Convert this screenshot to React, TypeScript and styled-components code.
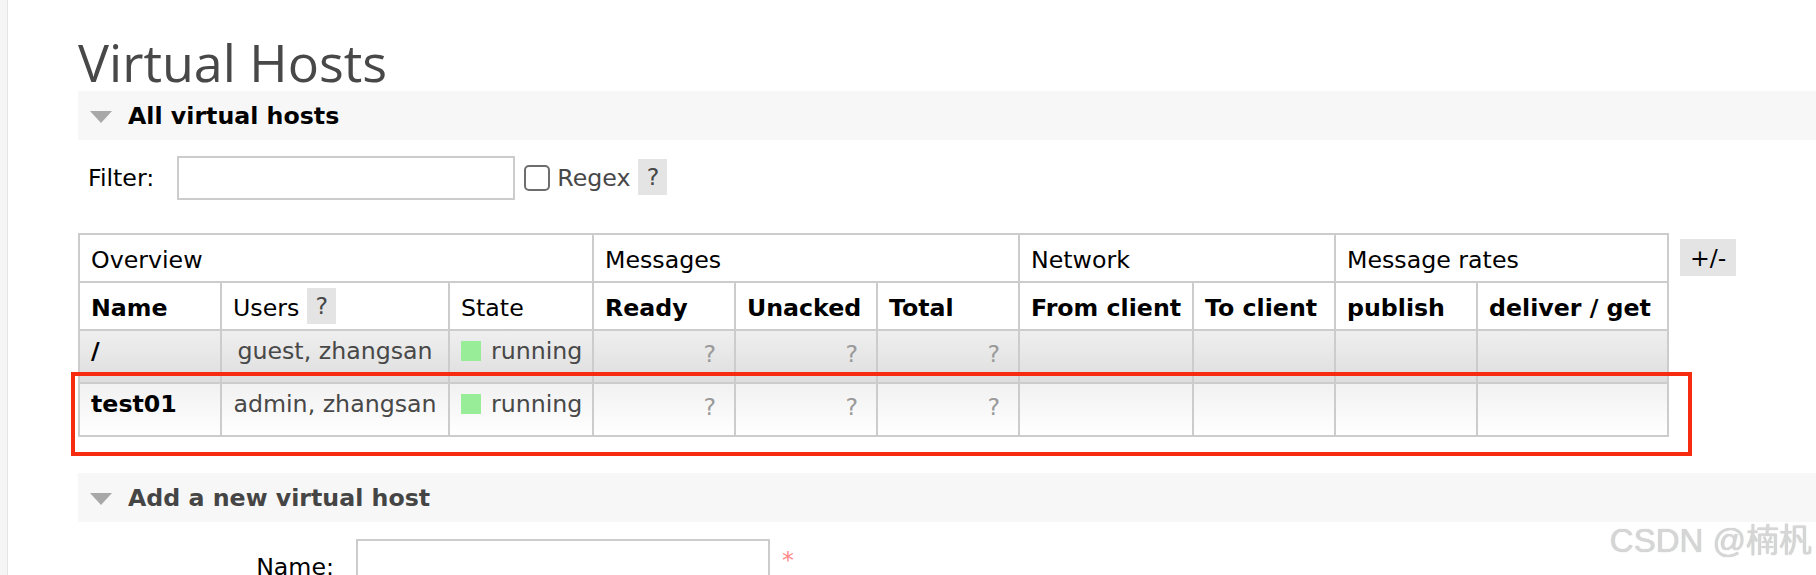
import React from "react";
import styled, { createGlobalStyle } from "styled-components";

const GlobalStyle = createGlobalStyle`
  html, body { margin: 0; padding: 0; background: #fff; }
  body {
    font-family: "DejaVu Sans", Verdana, sans-serif;
    font-size: 23.7px;
    color: #484848;
  }
  *, *::before, *::after { box-sizing: border-box; }
`;

const Shell = styled.div`
  position: relative;
  display: flex;
  width: 1816px;
  min-height: 575px;
  overflow: hidden;
`;

const Gutter = styled.div`
  flex: none;
  width: 8px;
  background: #f5f5f5;
  border-right: 1px solid #e4e4e4;
`;

const Main = styled.main`
  flex: 1;
  min-width: 0;
  padding: 36px 0 0 70px;
`;

const Title = styled.h1`
  margin: 0;
  font-family: "Open Sans", "DejaVu Sans", sans-serif;
  font-weight: 400;
  font-size: 52px;
  line-height: 52px;
  color: #484848;
`;

const SectionBar = styled.div<{ $gap: number }>`
  display: flex;
  align-items: center;
  gap: 16px;
  height: 49px;
  margin-top: ${(p) => p.$gap}px;
  padding-left: 12px;
  background: #f7f7f7;
`;

const Toggle = styled.svg`
  flex: none;
  margin-top: 3px;
`;

const SectionTitle = styled.h2<{ $muted?: boolean }>`
  margin: 0;
  font-size: 23.7px;
  font-weight: 700;
  color: ${(p) => (p.$muted ? "#454545" : "#000")};
`;

const FilterRow = styled.div`
  display: flex;
  align-items: center;
  height: 44px;
  margin-top: 16px;
  padding-left: 10px;
`;

const FieldLabel = styled.label`
  color: #000;
  margin-right: 23px;
`;

const TextField = styled.input<{ $width: number }>`
  width: ${(p) => p.$width}px;
  height: 44px;
  margin: 0;
  padding: 0 6px;
  border: 2px solid #ccc;
  border-radius: 0;
  font: inherit;
  outline: none;
  background: #fff;
`;

const CheckBox = styled.input`
  appearance: none;
  width: 26px;
  height: 26px;
  margin: 0 0 0 9px;
  border: 2px solid #6d6d6d;
  border-radius: 5px;
  background: #fff;
`;

const CheckText = styled.span`
  margin-left: 7px;
  color: #484848;
`;

const HelpBadge = styled.span<{ $lift?: number }>`
  display: inline-flex;
  align-items: center;
  justify-content: center;
  flex: none;
  width: 29px;
  height: 36px;
  margin-left: ${(p) => (p.$lift !== undefined ? 8 : 6)}px;
  margin-top: ${(p) => p.$lift ?? -4}px;
  background: #e4e4e4;
  color: #484848;
  font-weight: 400;
`;

const TableRow = styled.div`
  position: relative;
  display: flex;
  align-items: flex-start;
  margin-top: 33px;
`;

const Grid = styled.div`
  display: inline-grid;
  grid-template-columns: 142px 228px 144px 142px 142px 142px 174px 142px 142px 191px;
  grid-template-rows: 48px 48px 53px 53px;
  border-top: 2px solid #ccc;
  border-left: 2px solid #ccc;
`;

const HeadCell = styled.div<{ $span?: number; $bold?: boolean }>`
  grid-column: span ${(p) => p.$span ?? 1};
  display: flex;
  align-items: flex-start;
  padding: 11px 11px 0;
  border-right: 2px solid #ccc;
  border-bottom: 2px solid #ccc;
  background: #fff;
  color: #000;
  font-weight: ${(p) => (p.$bold ? 700 : 400)};
  white-space: nowrap;
`;

const DataCell = styled.div<{
  $alt: 1 | 2;
  $align?: "left" | "center" | "right";
  $bold?: boolean;
  $muted?: boolean;
}>`
  display: flex;
  align-items: flex-start;
  justify-content: ${(p) =>
    p.$align === "center" ? "center" : p.$align === "right" ? "flex-end" : "flex-start"};
  padding: ${(p) => (p.$align === "right" ? "9px 18px 0 11px" : "6px 11px 0")};
  border-right: 2px solid #ccc;
  border-bottom: 2px solid #ccc;
  background: ${(p) =>
    p.$alt === 1
      ? "linear-gradient(to bottom, #efefef 0%, #dedede 100%)"
      : "linear-gradient(to bottom, #f1f1f1 0%, #ffffff 100%)"};
  color: ${(p) => (p.$bold ? "#000" : p.$muted ? "#9a9a9a" : "#484848")};
  font-weight: ${(p) => (p.$bold ? 700 : 400)};
  white-space: nowrap;
`;

const StateLine = styled.span`
  display: flex;
  align-items: center;
  gap: 10px;
`;

const StateDot = styled.span`
  width: 20px;
  height: 20px;
  background: #98ee98;
`;

const ToggleColumns = styled.button`
  height: 37px;
  margin: 6px 0 0 11px;
  padding: 0 10px;
  border: none;
  background: #e4e4e4;
  color: #000;
  font: inherit;
`;

const Highlight = styled.div`
  position: absolute;
  top: 139px;
  left: -7.5px;
  width: 1621.5px;
  height: 84px;
  border: 4.5px solid #f72b0f;
  pointer-events: none;
`;

const FormRow = styled.div`
  display: flex;
  align-items: flex-start;
  margin-top: 17px;
`;

const FormLabel = styled.label`
  width: 256px;
  padding-top: 14px;
  text-align: right;
  color: #000;
`;

const FormField = styled.div`
  display: flex;
  align-items: flex-start;
  margin-left: 22px;
`;

const Mandatory = styled.span`
  margin-left: 12px;
  padding-top: 7px;
  color: #f88;
`;

const Watermark = styled.div`
  position: absolute;
  right: 4px;
  top: 521px;
  font-family: "Liberation Sans", "Noto Sans CJK SC", sans-serif;
  font-size: 33px;
  line-height: 40px;
  color: #d6d6d6;
  text-shadow: 0 0 1px rgba(0, 0, 0, 0.28);
  pointer-events: none;
`;

type Row = { name: string; users: string; alt: 1 | 2 };

const rows: Row[] = [
  { name: "/", users: "guest, zhangsan", alt: 1 },
  { name: "test01", users: "admin, zhangsan", alt: 2 },
];

const Triangle = () => (
  <Toggle width="22" height="12" viewBox="0 0 22 12">
    <polygon points="0,0 22,0 11,12" fill="#a8a8a8" />
  </Toggle>
);

export default function App() {
  return (
    <>
      <GlobalStyle />
      <Shell>
        <Gutter />
        <Main>
          <Title>Virtual Hosts</Title>
          <SectionBar $gap={3}>
            <Triangle />
            <SectionTitle>All virtual hosts</SectionTitle>
          </SectionBar>

          <FilterRow>
            <FieldLabel>Filter:</FieldLabel>
            <TextField $width={338} type="text" />
            <CheckBox type="checkbox" />
            <CheckText>Regex</CheckText>
            <HelpBadge $lift={-2}>?</HelpBadge>
          </FilterRow>

          <TableRow>
            <Grid>
              <HeadCell $span={3}>Overview</HeadCell>
              <HeadCell $span={3}>Messages</HeadCell>
              <HeadCell $span={2}>Network</HeadCell>
              <HeadCell $span={2}>Message rates</HeadCell>

              <HeadCell $bold>Name</HeadCell>
              <HeadCell>
                Users<HelpBadge $lift={-6}>?</HelpBadge>
              </HeadCell>
              <HeadCell>State</HeadCell>
              <HeadCell $bold>Ready</HeadCell>
              <HeadCell $bold>Unacked</HeadCell>
              <HeadCell $bold>Total</HeadCell>
              <HeadCell $bold>From client</HeadCell>
              <HeadCell $bold>To client</HeadCell>
              <HeadCell $bold>publish</HeadCell>
              <HeadCell $bold>deliver / get</HeadCell>

              {rows.map((r) => (
                <React.Fragment key={r.name}>
                  <DataCell $alt={r.alt} $bold>
                    {r.name}
                  </DataCell>
                  <DataCell $alt={r.alt} $align="center">
                    {r.users}
                  </DataCell>
                  <DataCell $alt={r.alt}>
                    <StateLine>
                      <StateDot />
                      running
                    </StateLine>
                  </DataCell>
                  <DataCell $alt={r.alt} $align="right" $muted>?</DataCell>
                  <DataCell $alt={r.alt} $align="right" $muted>?</DataCell>
                  <DataCell $alt={r.alt} $align="right" $muted>?</DataCell>
                  <DataCell $alt={r.alt} />
                  <DataCell $alt={r.alt} />
                  <DataCell $alt={r.alt} />
                  <DataCell $alt={r.alt} />
                </React.Fragment>
              ))}
            </Grid>
            <ToggleColumns>+/-</ToggleColumns>
            <Highlight />
          </TableRow>

          <SectionBar $gap={36}>
            <Triangle />
            <SectionTitle $muted>Add a new virtual host</SectionTitle>
          </SectionBar>

          <FormRow>
            <FormLabel>Name:</FormLabel>
            <FormField>
              <TextField $width={414} type="text" />
              <Mandatory>*</Mandatory>
            </FormField>
          </FormRow>
        </Main>
        <Watermark>CSDN @楠杋</Watermark>
      </Shell>
    </>
  );
}
